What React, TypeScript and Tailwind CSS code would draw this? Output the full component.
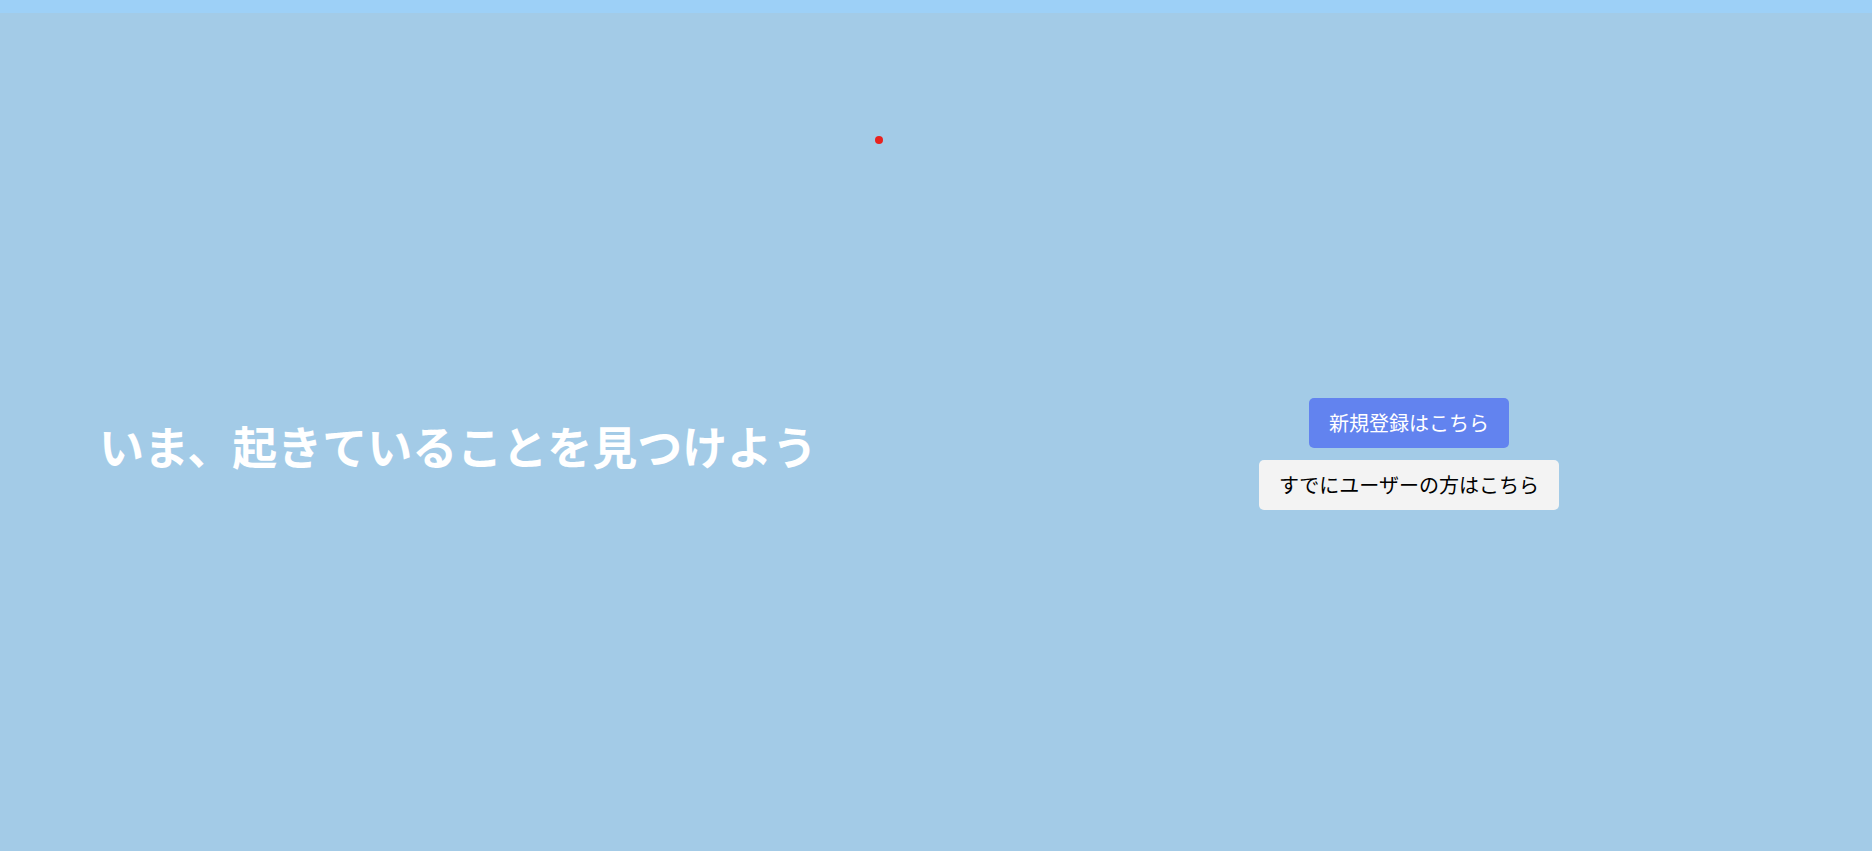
import React from "react";

export default function App() {
  return (
    <div
      className="relative w-full h-[851px] bg-[#a3cbe7] overflow-hidden"
      style={{ fontFamily: '"Noto Sans CJK JP", "Noto Sans", sans-serif' }}
    >
      <div className="h-[13px] bg-[#9dd0f7]" />
      <div className="absolute left-[875px] top-[136px] w-[8px] h-[8px] rounded-full bg-[#e8221f]" />
      <div className="flex h-[838px]">
        <div className="w-1/2 flex items-center pl-[99px] pt-[26px]">
          <h1 className="text-[45px] leading-none font-bold text-white">
            いま、起きていることを見つけよう
          </h1>
        </div>
        <div className="w-1/2 flex flex-col items-center justify-center gap-3 pl-[10px] pt-[44px]">
          <button className="w-[200px] h-[50px] rounded-[5px] bg-[#6283ef] text-white text-xl">
            新規登録はこちら
          </button>
          <button className="w-[300px] h-[50px] rounded-[5px] bg-[#f3f3f3] text-black text-xl">
            すでにユーザーの方はこちら
          </button>
        </div>
      </div>
    </div>
  );
}
